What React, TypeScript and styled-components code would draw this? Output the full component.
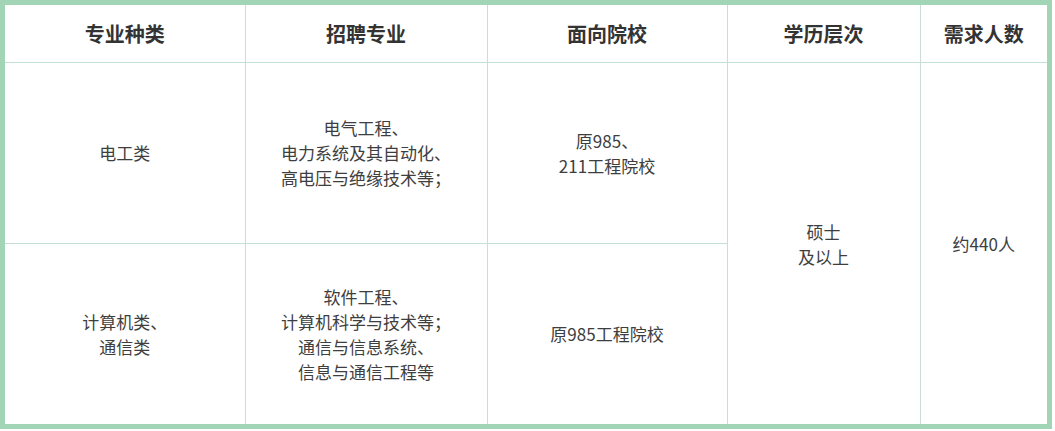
import React from 'react';
import styled, { createGlobalStyle } from 'styled-components';

const GlobalStyle = createGlobalStyle`
  html, body {
    margin: 0;
    padding: 0;
    background: #ffffff;
  }
  body {
    font-family: "Noto Sans CJK SC", "Noto Sans", sans-serif;
  }
`;

const rows = [
  {
    category: ['电工类'],
    majors: ['电气工程、', '电力系统及其自动化、', '高电压与绝缘技术等；'],
    schools: ['原985、', '211工程院校'],
  },
  {
    category: ['计算机类、', '通信类'],
    majors: ['软件工程、', '计算机科学与技术等；', '通信与信息系统、', '信息与通信工程等'],
    schools: ['原985工程院校'],
  },
];

const Lines = ({ items }: { items: string[] }) => (
  <>
    {items.map((t, i) => (
      <Line key={i}>{t}</Line>
    ))}
  </>
);

const App = () => {
  return (
    <>
      <GlobalStyle />
      <Frame>
        <Table>
          <colgroup>
            <col style={{ width: 240 }} />
            <col style={{ width: 242 }} />
            <col style={{ width: 240 }} />
            <col style={{ width: 193 }} />
            <col style={{ width: 127 }} />
          </colgroup>
          <thead>
            <tr>
              <HeadCell>专业种类</HeadCell>
              <HeadCell>招聘专业</HeadCell>
              <HeadCell>面向院校</HeadCell>
              <HeadCell>学历层次</HeadCell>
              <HeadCell $last>需求人数</HeadCell>
            </tr>
          </thead>
          <tbody>
            {rows.map((r, i) => (
              <BodyRow key={i}>
                <Cell $bottom={i === 0}>
                  <Lines items={r.category} />
                </Cell>
                <Cell $bottom={i === 0}>
                  <Lines items={r.majors} />
                </Cell>
                <Cell $bottom={i === 0}>
                  <Lines items={r.schools} />
                </Cell>
                {i === 0 && (
                  <>
                    <Cell rowSpan={2}>
                      <Line>硕士</Line>
                      <Line>及以上</Line>
                    </Cell>
                    <Cell rowSpan={2} $last>
                      <Line>约440人</Line>
                    </Cell>
                  </>
                )}
              </BodyRow>
            ))}
          </tbody>
        </Table>
      </Frame>
    </>
  );
};

const Frame = styled.div`
  width: 1042px;
  height: 419px;
  border: 5px solid #a2d5b5;
  background: #ffffff;
  overflow: hidden;
`;

const Table = styled.table`
  width: 100%;
  height: 100%;
  border-collapse: collapse;
  table-layout: fixed;
`;

const HeadCell = styled.th<{ $last?: boolean }>`
  height: 57px;
  padding: 0;
  text-align: center;
  vertical-align: middle;
  font-size: 20px;
  font-weight: 700;
  color: #333333;
  border-bottom: 1px solid #c3ded2;
  border-right: ${p => (p.$last ? 'none' : '1px solid #c9dcd5')};
`;

const BodyRow = styled.tr`
  height: 180px;
`;

const Cell = styled.td<{ $last?: boolean; $bottom?: boolean }>`
  padding: 0;
  text-align: center;
  vertical-align: middle;
  font-size: 17px;
  line-height: 25px;
  color: #3e3e3e;
  border-right: ${p => (p.$last ? 'none' : '1px solid #c9dcd5')};
  border-bottom: ${p => (p.$bottom ? '1px solid #c3ded2' : 'none')};
`;

const Line = styled.div`
  white-space: nowrap;
`;

export default App;
